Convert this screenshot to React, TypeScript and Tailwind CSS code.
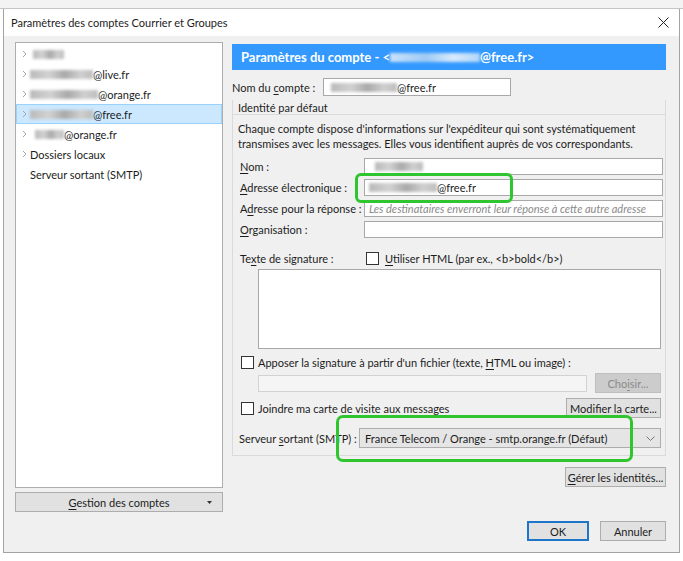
import type { ReactNode } from "react";

function Blur({ w, tone = "gray" }: { w: number; tone?: "gray" | "blue" }) {
  const cls =
    tone === "blue"
      ? "inline-block h-[9px] bg-[linear-gradient(90deg,#c9e2fb,#9fcaf5_40%,#d8eafc_70%,#b3d6f8)] blur-[1.5px]"
      : "inline-block h-[9px] bg-[linear-gradient(90deg,#b9b9b9,#d2d2d2_30%,#a9a9a9_55%,#cfcfcf_80%,#bdbdbd)] blur-[1.5px]";
  return <span className={cls} style={{ width: w }} />;
}

function U({ children }: { children: ReactNode }) {
  return <span className="underline underline-offset-[2px] decoration-[1px]">{children}</span>;
}

function Chevron() {
  return (
    <svg width="6" height="8" viewBox="0 0 6 8" className="shrink-0">
      <path d="M1 1l3 3-3 3" fill="none" stroke="#a6a6a6" strokeWidth="1" />
    </svg>
  );
}

function Check() {
  return <span className="inline-block w-[13px] h-[13px] bg-white border border-[#333] shrink-0" />;
}

function Btn({ w, children, disabled, primary }: { w: number; children: ReactNode; disabled?: boolean; primary?: boolean }) {
  return (
    <div
      className={
        "h-[20px] flex items-center justify-center shrink-0 whitespace-nowrap " +
        (disabled
          ? "bg-[#cccccc] border border-[#bfbfbf] text-[#8a8a8a]"
          : primary
          ? "bg-[#e1e1e1] border-2 border-[#1f76c9]"
          : "bg-[#e1e1e1] border border-[#adadad]")
      }
      style={{ width: w }}
    >
      {children}
    </div>
  );
}

function TreeRow({ arrow = true, selected, children }: { arrow?: boolean; selected?: boolean; children: ReactNode }) {
  return (
    <div
      className={
        "h-[20px] flex items-center pl-[5px] gap-[2px] " +
        (selected ? "bg-[#cce8ff] border border-[#99d1ff]" : "border border-transparent")
      }
    >
      <span className="w-[6px] flex">{arrow && <Chevron />}</span>
      <span className="flex items-center">{children}</span>
    </div>
  );
}

export default function App() {
  return (
    <div className="relative w-[683px] h-[561px] bg-white overflow-hidden font-['Lato',sans-serif] text-[11px] text-[#1c1c1c] leading-none whitespace-nowrap">
      {/* window behind */}
      <div className="h-[9px] bg-[#f3f3f3] border-b border-[#c4c4c4]" />

      <div className="ml-[3px] w-[677px] border-x border-b border-[#a3a3a3]">
        {/* title bar */}
        <div className="h-[27px] bg-white flex items-center justify-between pl-[7px] pr-[10px] text-[11px]">
          <span>Paramètres des comptes Courrier et Groupes</span>
          <svg width="11" height="11" viewBox="0 0 11 11">
            <path d="M0.5 0.5l10 10M10.5 0.5l-10 10" stroke="#222" strokeWidth="1" />
          </svg>
        </div>

        <div className="bg-[#f0f0f0] pl-[11px] pr-[13px] pt-[6px] pb-[11px]">
          <div className="flex">
            {/* left column */}
            <div className="w-[208px] flex flex-col">
              <div className="h-[446px] bg-white border border-[#adadad] pt-[1px]">
                <TreeRow>
                  <span className="ml-[3px] flex"><Blur w={31} /></span>
                </TreeRow>
                <TreeRow>
                  <Blur w={63} />
                  <span>@live.fr</span>
                </TreeRow>
                <TreeRow>
                  <Blur w={68} />
                  <span>@orange.fr</span>
                </TreeRow>
                <TreeRow selected>
                  <Blur w={63} />
                  <span>@free.fr</span>
                </TreeRow>
                <TreeRow>
                  <span className="ml-[5px] flex"><Blur w={29} /></span>
                  <span>@orange.fr</span>
                </TreeRow>
                <TreeRow>
                  <span>Dossiers locaux</span>
                </TreeRow>
                <TreeRow arrow={false}>
                  <span>Serveur sortant (SMTP)</span>
                </TreeRow>
              </div>
              <div className="mt-[4px] h-[20px] bg-[#e1e1e1] border border-[#adadad] flex items-center relative">
                <span className="flex-1 text-center">
                  <U>G</U>estion des comptes
                </span>
                <svg width="5" height="3" viewBox="0 0 5 3" className="absolute right-[10px] top-[8px]">
                  <path d="M0 0h5l-2.5 3z" fill="#333" />
                </svg>
              </div>
            </div>

            {/* right column */}
            <div className="w-[434px] ml-[9px] pt-[2px] flex flex-col">
              <div className="h-[26px] bg-[#3399ff] flex items-center pl-[9px] text-white font-bold text-[13px]">
                <span>Paramètres du compte - &lt;</span>
                <Blur w={90} tone="blue" />
                <span>@free.fr&gt;</span>
              </div>

              <div className="mt-[8px] h-[18px] flex items-center">
                <span className="w-[91px]">
                  Nom du <U>c</U>ompte :
                </span>
                <div className="w-[188px] h-[18px] bg-white border border-[#a8a8a8] flex items-center pl-[7px]">
                  <Blur w={66} />
                  <span>@free.fr</span>
                </div>
              </div>

              {/* groupbox */}
              <div className="mt-[4px] border border-[#dadada] border-t-0">
                <div className="h-[14px] flex items-center pl-[5px] border-l border-[#dadada] -ml-[1px]">
                  <span>Identité par défaut</span>
                </div>
                <div className="border-t border-[#dadada] pl-[5px] pr-[4px] pb-[7px]">
                  <div className="pt-[6px] leading-[15px]">
                    <div>Chaque compte dispose d'informations sur l'expéditeur qui sont systématiquement</div>
                    <div>transmises avec les messages. Elles vous identifient auprès de vos correspondants.</div>
                  </div>

                  <div className="mt-[7px] grid grid-cols-[124px_299px] gap-y-[4px] items-center pl-[2px]">
                    <span>
                      <U>N</U>om :
                    </span>
                    <div className="h-[17px] bg-white border border-[#a8a8a8] flex items-center pl-[10px]">
                      <Blur w={48} />
                    </div>
                    <span>
                      <U>A</U>dresse électronique :
                    </span>
                    <div className="h-[17px] bg-white border border-[#a8a8a8] flex items-center pl-[4px]">
                      <Blur w={68} />
                      <span>@free.fr</span>
                    </div>
                    <span>
                      A<U>d</U>resse pour la réponse :
                    </span>
                    <div className="h-[17px] bg-white border border-[#a8a8a8] flex items-center pl-[4px] italic text-[#8a8a8a] overflow-hidden text-[11px]">
                      Les destinataires enverront leur réponse à cette autre adresse
                    </div>
                    <span>
                      <U>O</U>rganisation :
                    </span>
                    <div className="h-[17px] bg-white border border-[#a8a8a8]" />
                  </div>

                  <div className="mt-[13px] h-[14px] flex items-center pl-[2px]">
                    <span className="w-[126px]">
                      Te<U>x</U>te de signature :
                    </span>
                    <Check />
                    <span className="ml-[6px]">
                      <U>U</U>tiliser HTML (par ex., &lt;b&gt;bold&lt;/b&gt;)
                    </span>
                  </div>

                  <div className="mt-[4px] ml-[20px] h-[80px] bg-white border border-[#a8a8a8]" />

                  <div className="mt-[6px] h-[14px] flex items-center pl-[3px]">
                    <Check />
                    <span className="ml-[4px]">
                      Apposer la signature à partir d'un fichier (texte, <U>H</U>TML ou image) :
                    </span>
                  </div>

                  <div className="mt-[4px] h-[20px] flex items-center pl-[20px]">
                    <div className="w-[330px] h-[17px] bg-[#f5f5f5] border border-[#d2d2d2]" />
                    <div className="ml-[8px]">
                      <Btn w={66} disabled>
                        Cho<U>i</U>sir...
                      </Btn>
                    </div>
                  </div>

                  <div className="mt-[5px] h-[20px] flex items-center pl-[3px]">
                    <Check />
                    <span className="ml-[4px] flex-1">
                      Joindre ma carte de <U>v</U>isite aux messages
                    </span>
                    <Btn w={95}>
                      <span>
                        <U>M</U>odifier la carte...
                      </span>
                    </Btn>
                  </div>

                  <div className="mt-[10px] h-[20px] flex items-center pl-[1px]">
                    <span className="w-[120px]">
                      Serveur <U>s</U>ortant (SMTP) :
                    </span>
                    <div className="flex-1 h-[20px] bg-[#e5e5e5] border border-[#adadad] flex items-center pl-[5px] pr-[5px] justify-between font-normal">
                      <span>France Telecom / Orange - smtp.orange.fr (Défaut)</span>
                      <svg width="9" height="5" viewBox="0 0 9 5">
                        <path d="M0.5 0.5l4 4 4-4" fill="none" stroke="#777" strokeWidth="1" />
                      </svg>
                    </div>
                  </div>
                </div>
              </div>

              <div className="mt-[11px] flex justify-end">
                <Btn w={101}>
                  <span>
                    <U>G</U>érer les identités...
                  </span>
                </Btn>
              </div>
            </div>
          </div>

          <div className="mt-[9px] flex justify-end gap-[11px]">
            <Btn w={62} primary>
              OK
            </Btn>
            <Btn w={66}>Annuler</Btn>
          </div>
        </div>
      </div>

      {/* annotation highlights */}
      <div className="absolute left-[355px] top-[173px] w-[158px] h-[30px] border-[3px] border-[#2ec52e] rounded-[6px]" />
      <div className="absolute left-[336px] top-[415px] w-[297px] h-[47px] border-[3px] border-[#2ec52e] rounded-[7px]" />
    </div>
  );
}
